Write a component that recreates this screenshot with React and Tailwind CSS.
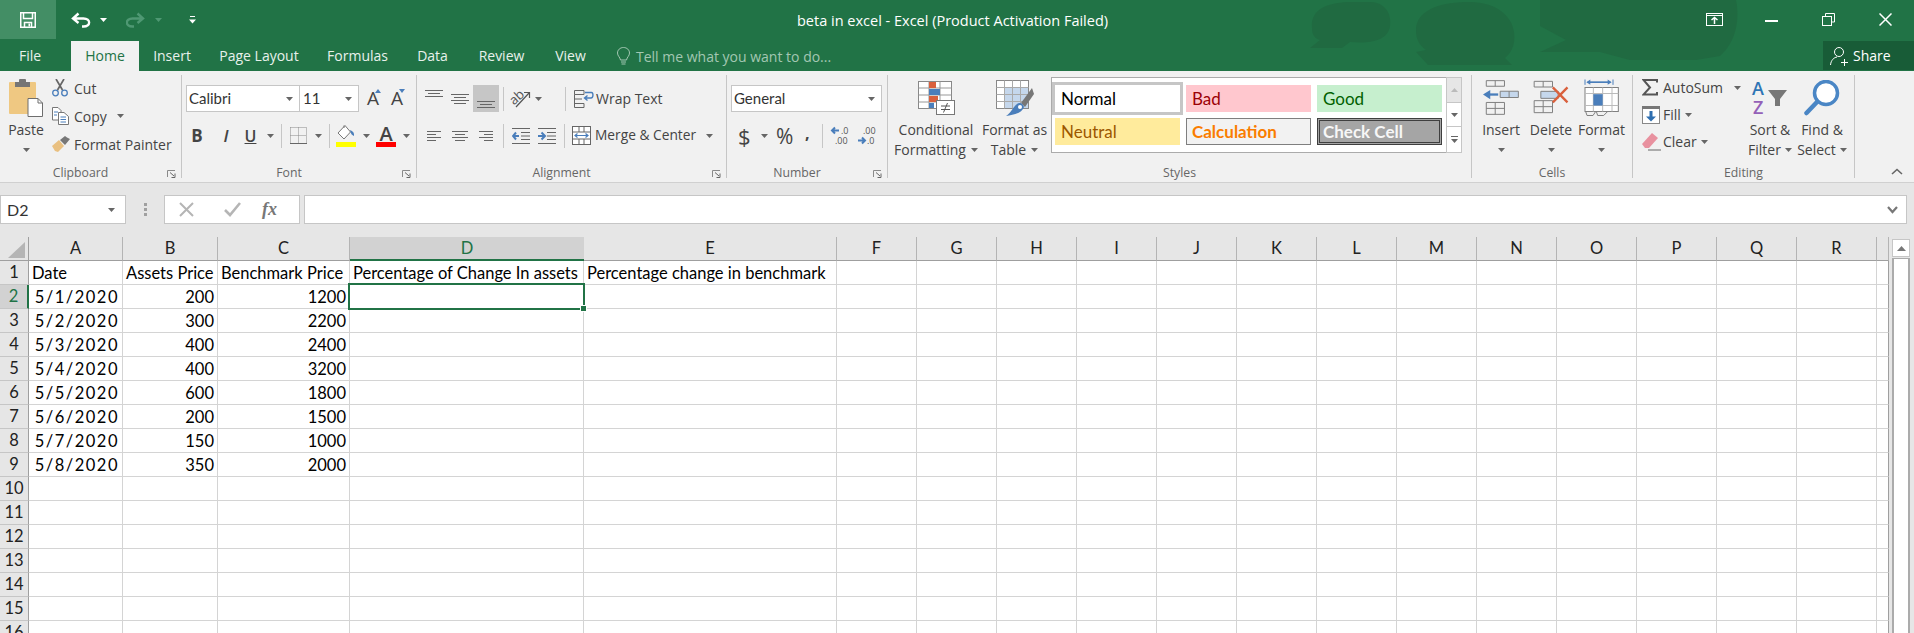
import React from 'react';

const Caret = ({ color = '#666', className = '' }) => (
  <svg width="7" height="4" viewBox="0 0 7 4" className={`shrink-0 ${className}`}>
    <path d="M0 0H7L3.5 4Z" fill={color} />
  </svg>
);

const Launcher = () => (
  <svg width="9" height="8" viewBox="0 0 9 8" className="shrink-0">
    <path d="M.5 7V.5H8" fill="none" stroke="#8a8a8a" />
    <path d="M3 2.5L7 6M8 3.5V7.5H4.5" fill="none" stroke="#666" />
  </svg>
);

const Sep = ({ className = '' }) => <div className={`w-px h-[24px] bg-[#c6c6c6] shrink-0 ${className}`} />;

const Lines = ({ rows, width = 18, height = 12 }) => (
  <svg width={width} height={height} viewBox={`0 0 ${width} ${height}`}>
    {rows.map(([a, b, y], i) => (
      <path key={i} d={`M${a} ${y + 0.5}H${b}`} stroke="#666" />
    ))}
  </svg>
);

// each ribbon group: content on top, name + launcher below
const Group = ({ name, launcher, className, children }) => (
  <div className={`shrink-0 h-[103px] border-r border-[#c6c6c6] flex flex-col ${className}`}>
    <div className="h-[90px] shrink-0 flex">{children}</div>
    <div className="h-[13px] shrink-0 mt-[2px] flex items-center text-[12.25px] text-[#666]">
      <span className="flex-1 text-center">{name}</span>
      {launcher && <div className="w-[20px] flex justify-end pr-[5px] pt-[1px]"><Launcher /></div>}
    </div>
  </div>
);

const BigBtn = ({ icon, lines, caretBelow, className = '' }) => (
  <div className={`flex flex-col items-center shrink-0 ${className}`}>
    <div className="h-[45px] flex items-center justify-center">{icon}</div>
    {lines.map((l, i) => (
      <div key={i} className="h-[20px] leading-[20px] flex items-center whitespace-nowrap">{l}</div>
    ))}
    {caretBelow && <div className="h-[20px] flex items-center"><Caret /></div>}
  </div>
);

const PasteIcon = () => (
  <svg width="34" height="38" viewBox="0 0 34 38">
    <rect x="0" y="3" width="27" height="32" rx="1" fill="#efc882" />
    <rect x="6" y="3" width="15" height="5" fill="#757575" />
    <rect x="10" y="0" width="7" height="4" rx="1" fill="#757575" />
    <path d="M19 19.5H29L33.5 24V37.5H19Z" fill="#fff" stroke="#6e6e6e" />
    <path d="M29 19.5V24H33.5" fill="none" stroke="#6e6e6e" />
  </svg>
);

const CutIcon = () => (
  <svg width="16" height="18" viewBox="0 0 16 18">
    <path d="M4 0L10.5 11M12 0L5.5 11" stroke="#666" strokeWidth="1.7" />
    <circle cx="3.5" cy="14" r="2.8" fill="none" stroke="#4a7ebb" strokeWidth="1.3" />
    <circle cx="12.5" cy="14" r="2.8" fill="none" stroke="#4a7ebb" strokeWidth="1.3" />
  </svg>
);

const CopyIcon = () => (
  <svg width="17" height="18" viewBox="0 0 17 18">
    <path d="M.5.5H6L9 3.5V13H.5Z" fill="#fff" stroke="#777" />
    <path d="M6.5 5.5H12L16.5 9.5V17.5H6.5Z" fill="#fff" stroke="#777" />
    <path d="M2 5H6M2 8H5M8.5 10H14M8.5 12.5H14M8.5 15H14" stroke="#4a7ebb" />
  </svg>
);

const PainterIcon = () => (
  <svg width="18" height="16" viewBox="0 0 18 16">
    <path d="M0 10L7 4L12 10L6 16L3 15Z" fill="#e9c080" />
    <path d="M8 4L13 0L15 1.5L18 3L13 9Z" fill="#777" />
  </svg>
);

const BordersIcon = () => (
  <svg width="17" height="17" viewBox="0 0 17 17">
    <path d="M.5.5H16.5V16.5M.5.5V16.5M8.5.5V16.5M.5 8.5H16.5" fill="none" stroke="#888" strokeDasharray="1 1" />
    <path d="M0 16.5H17" stroke="#666" />
  </svg>
);

const FillIcon = () => (
  <div className="flex flex-col items-center w-[20px]">
    <svg width="18" height="17" viewBox="0 0 18 17">
      <path d="M8 .5L13.5 7L7 14L1 8Z" fill="#fff" stroke="#777" />
      <path d="M7 .5V3" stroke="#777" />
      <path d="M13 5C16 6 17.5 8 17 11C15 10 14 9 13.5 7Z" fill="#4a7ebb" />
    </svg>
    <div className="w-[20px] h-[5px] bg-[#ffff00]" />
  </div>
);

const OrientIcon = () => (
  <svg width="20" height="20" viewBox="0 0 20 20" className="overflow-visible">
    <text x="0" y="13" fontSize="13" fill="#555" transform="rotate(-42 6 11)" fontFamily="Open Sans, sans-serif">ab</text>
    <path d="M5 18L18 4M13 3.5H18.5V9" fill="none" stroke="#555" strokeWidth="1.2" />
  </svg>
);

const WrapIcon = () => (
  <svg width="20" height="18" viewBox="0 0 20 18">
    <path d="M.5.5H10V4.5H.5ZM.5 4.5V17.5H10V13.5H.5M.5 9H8" fill="none" stroke="#666" />
    <path d="M11 2.5H17.5C19.5 2.5 19.5 8 17 8H11M13.5 5.5L10.5 8L13.5 10.5" fill="none" stroke="#4a7ebb" strokeWidth="1.4" />
  </svg>
);

const MergeIcon = () => (
  <svg width="20" height="19" viewBox="0 0 20 19">
    <rect x=".5" y=".5" width="18" height="18" fill="#fff" stroke="#666" />
    <path d="M.5 6H18.5M.5 13H18.5M7 .5V6M12 .5V6M7 13V18.5M12 13V18.5" stroke="#666" />
    <path d="M3 9.5H16M5.5 7.5L3 9.5L5.5 11.5M13.5 7.5L16 9.5L13.5 11.5" fill="none" stroke="#4a7ebb" strokeWidth="1.2" />
  </svg>
);

const IndentIcon = ({ flip }) => (
  <svg width="18" height="16" viewBox="0 0 18 16">
    <path d="M0 .5H18M0 15.5H18M9 4.5H18M9 8H18M9 11.5H18" stroke="#666" />
    {flip ? (
      <path d="M7 8H1M4 4.5L1 8L4 11.5" fill="none" stroke="#4a7ebb" strokeWidth="2" />
    ) : (
      <path d="M0 8H6.5M3.5 4.5L7 8L3.5 11.5" fill="none" stroke="#4a7ebb" strokeWidth="2" />
    )}
  </svg>
);

const DecimalIcon = ({ more }) => (
  <svg width="20" height="18" viewBox="0 0 20 18" className="overflow-visible" fontFamily="Open Sans, sans-serif" fontSize="9" fill="#555">
    {more ? (
      <>
        <path d="M0 3.5H7M3 .5L0 3.5L3 6.5" fill="none" stroke="#4a7ebb" strokeWidth="2" />
        <text x="9" y="7">.0</text>
        <text x="3" y="17">.00</text>
      </>
    ) : (
      <>
        <text x="5" y="7">.00</text>
        <path d="M0 13.5H7M4 10.5L7 13.5L4 16.5" fill="none" stroke="#4a7ebb" strokeWidth="2" />
        <text x="9" y="17">.0</text>
      </>
    )}
  </svg>
);

const CondIcon = () => (
  <svg width="37" height="34" viewBox="0 0 37 34">
    <rect x=".5" y=".5" width="33" height="27" fill="#fff" stroke="#888" />
    <path d="M11 .5V27.5M22 .5V27.5M.5 7H33.5M.5 14H33.5M.5 21H33.5" stroke="#999" />
    <rect x="11" y="1" width="7" height="6" fill="#d9603d" />
    <rect x="11" y="8" width="11" height="6" fill="#4a7ebb" />
    <rect x="11" y="15" width="9" height="6" fill="#d9603d" />
    <rect x="11" y="22" width="5" height="5" fill="#4a7ebb" />
    <rect x="18.5" y="19.5" width="18" height="14" fill="#fff" stroke="#777" />
    <path d="M23 25H32M23 28.5H32M29.5 22L25.5 31.5" stroke="#555" />
  </svg>
);

const TableIcon = () => (
  <svg width="38" height="36" viewBox="0 0 38 36">
    <rect x=".5" y=".5" width="32" height="28" fill="#fff" stroke="#888" />
    <rect x="9" y="8" width="23" height="20" fill="#c5d7ec" />
    <path d="M8.5 .5V28.5M16.5 .5V28.5M24.5 .5V28.5M.5 7.5H32.5M.5 14.5H32.5M.5 21.5H32.5" stroke="#aaa" />
    <path d="M36 8L38 14L29 27L25 23Z" fill="#777" />
    <path d="M28 27C26 33 18 35 10 36C15 33 17 27 21 24C23 22 27 23 28 27Z" fill="#4a7ebb" />
    <circle cx="24" cy="27" r="2" fill="#fff" />
  </svg>
);

const InsertIcon = () => (
  <svg width="38" height="37" viewBox="15 10 115 110" fill="none" stroke="#808080" strokeWidth="3">
    <path d="M28 14H83V31H28ZM55 14V31" />
    <path d="M70 46H125V65H70ZM97 46V65" fill="#c5d7ec" />
    <path d="M28 80H83V116H28ZM55 80V116M28 98H83" />
    <path d="M64 56H26" stroke="#4a7ebb" strokeWidth="7" />
    <path d="M18 56L40 42V70Z" fill="#4a7ebb" stroke="none" />
  </svg>
);

const DeleteIcon = () => (
  <svg width="37" height="35" viewBox="175 10 110 105" fill="none" stroke="#808080" strokeWidth="3">
    <path d="M178 14H233V31H178ZM205 14V31" />
    <path d="M198 44H250V65H198Z" fill="#c5d7ec" />
    <path d="M178 72H233V108H178ZM205 72V108M178 90H233" />
    <path d="M234 32L278 77M278 32L234 77" stroke="#d9603d" strokeWidth="7" />
  </svg>
);

const FormatIcon = () => (
  <svg width="35" height="39" viewBox="325 6 105 116" fill="none" stroke="#808080" strokeWidth="3">
    <path d="M328 10V26M412 10V26" stroke="#4a7ebb" />
    <path d="M336 18H404" stroke="#4a7ebb" strokeWidth="5" />
    <path d="M332 18L344 10V26ZM408 18L396 10V26Z" fill="#4a7ebb" stroke="none" />
    <rect x="328" y="34" width="100" height="72" fill="#fff" />
    <path d="M353 34V106M381 34V106M409 34V106M328 52H428M328 88H428" stroke="#bbb" />
    <rect x="353" y="54" width="28" height="34" fill="#4a7ebb" stroke="none" />
    <path d="M330 106L334 118H352L360 106M362 106L366 118H384L396 106" />
  </svg>
);

const SigmaIcon = () => (
  <svg width="16" height="17" viewBox="0 0 16 17">
    <path d="M15 3.5V1H1.5L8 8.5L1.5 15.5H15V13" fill="none" stroke="#555" strokeWidth="2" />
  </svg>
);

const FillDownIcon = () => (
  <svg width="18" height="18" viewBox="0 0 18 18">
    <rect x=".5" y=".5" width="17" height="17" fill="#fff" stroke="#888" />
    <rect x="0" y="0" width="18" height="3" fill="#777" />
    <path d="M9 5V12" stroke="#2f6fb0" strokeWidth="3" />
    <path d="M4 10.5H14L9 15.5Z" fill="#2f6fb0" />
  </svg>
);

const ClearIcon = () => (
  <svg width="19" height="18" viewBox="0 0 19 18">
    <path d="M0 11L10 0L16 5L7 15H3Z" fill="#e8919f" />
    <path d="M6 17H19" stroke="#666" />
  </svg>
);

const SortIcon = () => (
  <svg width="37" height="34" viewBox="0 0 37 34" className="overflow-visible" fontFamily="Open Sans, sans-serif" fontWeight="600">
    <text x="0" y="14" fontSize="18" fill="#2f75b5">A</text>
    <text x="1" y="33" fontSize="18" fill="#9460b8">Z</text>
    <path d="M16 9H35L28 18V25H23V18Z" fill="#777" />
  </svg>
);

const FindIcon = () => (
  <svg width="36" height="36" viewBox="0 0 36 36">
    <circle cx="22" cy="13" r="11.5" fill="#fff" stroke="#4a86c5" strokeWidth="3.5" />
    <path d="M13 22L2.5 33" stroke="#4a86c5" strokeWidth="4.5" strokeLinecap="round" />
  </svg>
);

const Sheet = () => {
  const columns = ['A', 'B', 'C', 'D', 'E', 'F', 'G', 'H', 'I', 'J', 'K', 'L', 'M', 'N', 'O', 'P', 'Q', 'R', ''];
  const data = [
    ['Date', 'Assets Price', 'Benchmark Price', 'Percentage of Change In assets', 'Percentage change in benchmark'],
    ['5/1/2020', '200', '1200'],
    ['5/2/2020', '300', '2200'],
    ['5/3/2020', '400', '2400'],
    ['5/4/2020', '400', '3200'],
    ['5/5/2020', '600', '1800'],
    ['5/6/2020', '200', '1500'],
    ['5/7/2020', '150', '1000'],
    ['5/8/2020', '350', '2000'],
  ];
  const rows = Array.from({ length: 16 }, (_, i) => i + 1);

  return (
    <div className="grid grid-cols-[29px_94px_95px_132px_234px_253px_repeat(13,80px)_12px] auto-rows-[24px] w-[1889px] font-['Lato',sans-serif] text-[16.5px] text-black">
      <div className="bg-[#e6e6e6] border-r border-b border-[#9f9f9f] flex items-end justify-end pr-[3px] pb-[2px]">
        <svg width="17" height="16" viewBox="0 0 17 16"><path d="M17 0V16H0Z" fill="#b5b5b5" /></svg>
      </div>
      {columns.map((c, i) => (
        <div
          key={i}
          className={
            c === 'D'
              ? 'bg-[#d2d2d2] border-b-2 border-[#217346] text-[#217346] flex items-center justify-center'
              : 'bg-[#e6e6e6] border-r border-b border-r-[#b4b4b4] border-b-[#9f9f9f] flex items-center justify-center text-[#222]'
          }
        >
          {c}
        </div>
      ))}
      {rows.map((r) => {
        const cells = data[r - 1] || [];
        return (
          <React.Fragment key={r}>
            <div
              className={
                r === 2
                  ? 'bg-[#d2d2d2] border-r-2 border-r-[#217346] border-b border-b-[#c6c6c6] flex items-center justify-center text-[#217346]'
                  : 'bg-[#e6e6e6] border-r border-b border-r-[#9f9f9f] border-b-[#c6c6c6] flex items-center justify-center text-[#222]'
              }
            >
              {r}
            </div>
            {columns.map((c, i) => (
              <div
                key={c + i}
                className={`relative bg-white border-r border-b border-[#d4d4d4] pt-[2px] flex items-center whitespace-nowrap ${
                  r > 1 && i === 0 ? 'justify-end pr-[3px] tracking-[1.5px]' : r > 1 && i < 3 ? 'justify-end pr-[3px]' : 'pl-[3px]'
                } ${i === 18 ? 'border-r-[#9f9f9f]' : ''}`}
              >
                {cells[i]}
                {r === 2 && c === 'D' && (
                  <div className="absolute z-10 -top-[2px] -left-[2px] -right-[2px] -bottom-[2px] border-2 border-[#217346]">
                    <div className="absolute -right-[4px] -bottom-[4px] w-[7px] h-[7px] bg-[#217346] border border-white" />
                  </div>
                )}
              </div>
            ))}
          </React.Fragment>
        );
      })}
    </div>
  );
};

const App = () => {
  return (
    <div className="w-[1914px] h-[633px] overflow-hidden bg-[#e6e6e6] font-['Open_Sans',sans-serif] text-[14px] text-[#444]">
      {/* title bar and tabs */}
      <div className="relative h-[71px] bg-[#217346] text-white">
        <svg className="absolute left-[1300px] top-0" width="560" height="65" viewBox="0 0 560 65">
          <g fill="#206a41">
            <path d="M12 28C10 8 30 2 52 2H70C85 2 92 14 90 26C88 40 72 44 50 42L42 48L10 48L20 40C14 38 12 34 12 28Z" />
            <path d="M116 30C116 12 136 2 170 2C196 2 212 16 214 32C216 46 210 54 205 58L212 65H128L116 52L126 50C118 44 116 38 116 30Z" />
            <path d="M240 0H436C440 20 436 42 420 56L396 60H330L300 52H240L266 40L240 26Z" />
          </g>
        </svg>

        <div className="relative h-[41px] flex">
          <div className="w-[56px] h-[39px] bg-[#438e65] flex items-center justify-center">
            <svg width="16" height="16" viewBox="0 0 16 16" fill="none" stroke="#fff">
              <path d="M.75.75H15.25V15.25H.75Z" strokeWidth="1.5" />
              <path d="M3.5 1V6.5H12.5V1M4.5 15V10.5H11.5V15" strokeWidth="1.5" />
              <rect x="8.5" y="11.5" width="1.5" height="3" fill="#fff" stroke="none" />
            </svg>
          </div>
          <div className="w-[741px] h-[39px] flex items-center">
            <svg className="ml-[15px]" width="20" height="16" viewBox="0 0 20 16" fill="none" stroke="#fff" strokeWidth="2.4">
              <path d="M7.5 1.5L2 6.5L7.5 11M2 6.5H12.5C20 6.5 20 14.5 12.5 14.5H11" />
            </svg>
            <Caret color="#fff" className="ml-[9px]" />
            <svg className="ml-[19px]" width="19" height="16" viewBox="0 0 19 16" fill="none" stroke="#4f9873" strokeWidth="2.4">
              <path d="M11.5 1.5L17 6.5L11.5 11M17 6.5H6.5C-1 6.5 -1 14.5 6.5 14.5H8" />
            </svg>
            <Caret color="#4f9873" className="ml-[10px]" />
            <svg className="ml-[27px]" width="7" height="8" viewBox="0 0 7 8">
              <path d="M1 .5H6" stroke="#fff" />
              <path d="M0 3.5H7L3.5 7.5Z" fill="#fff" />
            </svg>
          </div>
          <div className="h-[41px] flex items-center text-[14.5px] text-white">beta in excel - Excel (Product Activation Failed)</div>
          <div className="ml-auto flex items-center h-[39px]">
            <svg width="17" height="13" viewBox="0 0 17 13" fill="none" stroke="#fff" className="mr-[42px]">
              <rect x=".5" y=".5" width="16" height="12" />
              <path d="M.5 2.5H16.5" />
              <path d="M8.5 11V4.5M5.5 7L8.5 4.5L11.5 7" strokeWidth="1.5" />
            </svg>
            <div className="w-[13px] h-[2px] bg-white mr-[44px] mt-[3px]" />
            <svg width="13" height="13" viewBox="0 0 13 13" fill="none" stroke="#fff" className="mr-[44px]">
              <path d="M3.5 3V.5H12.5V9H9.5" />
              <rect x=".5" y="3.5" width="9" height="9" />
            </svg>
            <svg width="13" height="13" viewBox="0 0 13 13" fill="none" stroke="#fff" strokeWidth="1.5" className="mr-[22px]">
              <path d="M.5.5L12.5 12.5M12.5.5L.5 12.5" />
            </svg>
          </div>
        </div>

        <div className="relative h-[30px] flex text-[#e8f1ec]">
          <div className="w-[71px] pl-[19px] leading-[29px]">File</div>
          <div className="w-[68px] h-[30px] bg-[#f1f1f1] text-[#217346] text-center leading-[29px]">Home</div>
          <div className="w-[66px] text-center leading-[29px]">Insert</div>
          <div className="w-[108px] text-center leading-[29px]">Page Layout</div>
          <div className="w-[89px] text-center leading-[29px]">Formulas</div>
          <div className="w-[61px] text-center leading-[29px]">Data</div>
          <div className="w-[77px] text-center leading-[29px]">Review</div>
          <div className="w-[61px] text-center leading-[29px]">View</div>
          <div className="ml-[16px] flex items-center text-[#a3c7b2] leading-[29px]">
            <svg width="13" height="19" viewBox="0 0 13 19" fill="none" stroke="#a3c7b2">
              <path d="M3.5 13C3 10 .5 9 .5 6C.5 3 3 .5 6.5 .5S12.5 3 12.5 6C12.5 9 10 10 9.5 13ZM4 15H9M4.5 17H8.5" />
            </svg>
            <span className="ml-[6px]">Tell me what you want to do...</span>
          </div>
          <div className="ml-auto w-[91px] h-[29px] bg-[#185c37] flex items-center pl-[7px] text-white">
            <svg width="20" height="20" viewBox="0 0 20 20" fill="none" stroke="#fff">
              <circle cx="9" cy="6" r="4.5" />
              <path d="M.5 19C1 14 4 11.5 7 11M14.5 13V20M11 16.5H18" />
            </svg>
            <span className="ml-[3px]">Share</span>
          </div>
        </div>
      </div>

      {/* ribbon */}
      <div className="h-[112px] bg-[#f1f1f1] border-b border-[#d0d0d0] pt-[4px] flex">
        <Group name="Clipboard" launcher className="w-[182px]">
          <BigBtn className="w-[50px] ml-[1px]" icon={<PasteIcon />} lines={['Paste']} caretBelow />
          <div className="ml-[1px] -mt-[1px] flex flex-col">
            <div className="h-[28px] flex items-center"><span className="w-[22px]"><CutIcon /></span>Cut</div>
            <div className="h-[28px] flex items-center"><span className="w-[22px]"><CopyIcon /></span>Copy<Caret className="ml-[10px]" /></div>
            <div className="h-[28px] flex items-center whitespace-nowrap"><span className="w-[22px]"><PainterIcon /></span>Format Painter</div>
          </div>
        </Group>

        <Group name="Font" launcher className="w-[235px]">
          <div className="flex flex-col pl-[4px] pt-[10px]">
            <div className="h-[27px] flex">
              <div className="w-[114px] bg-white border border-[#c6c6c6] flex items-center justify-between pl-[2px] pr-[6px] font-['Lato',sans-serif] text-[15px] text-[#333]">Calibri<Caret /></div>
              <div className="w-[60px] -ml-px bg-white border border-[#c6c6c6] flex items-center justify-between pl-[3px] pr-[6px] font-['Lato',sans-serif] text-[15px] text-[#333]">11<Caret /></div>
              <div className="ml-[8px] w-[24px] flex items-start pt-[3px] text-[19px] leading-[20px]">A<svg width="6" height="4" viewBox="0 0 6 4" className="mt-[1px] -ml-[4px]"><path d="M3 0L6 4H0Z" fill="#4a7ebb" /></svg></div>
              <div className="w-[24px] flex items-start pt-[3px] text-[19px] leading-[20px]">A<svg width="6" height="4" viewBox="0 0 6 4" className="mt-[1px] -ml-[4px]"><path d="M0 0H6L3 4Z" fill="#4a7ebb" /></svg></div>
            </div>
            <div className="h-[27px] mt-[10px] -ml-[4px] flex items-center">
              <div className="w-[30px] text-center font-bold text-[17px]">B</div>
              <div className="w-[28px] text-center italic font-semibold text-[17px]">I</div>
              <div className="w-[21px] text-center underline font-semibold text-[16px]">U</div>
              <div className="w-[19px] flex justify-center"><Caret /></div>
              <Sep className="ml-[1px]" />
              <div className="w-[32px] flex justify-center"><BordersIcon /></div>
              <div className="w-[8px] flex justify-center"><Caret /></div>
              <Sep className="ml-[7px]" />
              <div className="w-[32px] flex justify-center"><FillIcon /></div>
              <div className="w-[8px] flex justify-center"><Caret /></div>
              <div className="w-[32px] flex flex-col items-center">
                <span className="font-semibold text-[20px] leading-[17px]">A</span>
                <div className="w-[20px] h-[5px] bg-[#ff0000]" />
              </div>
              <div className="w-[8px] flex justify-center"><Caret /></div>
            </div>
          </div>
        </Group>

        <Group name="Alignment" launcher className="w-[310px]">
          <div className="flex flex-col pl-[4px] pt-[10px]">
            <div className="h-[27px] flex items-center">
              <div className="w-[26px] flex justify-center -mt-[6px]"><Lines rows={[[0, 18, 0], [3, 15, 3], [0, 18, 6]]} /></div>
              <div className="w-[26px] flex justify-center"><Lines rows={[[0, 18, 1], [3, 15, 4], [0, 18, 7], [3, 15, 10]]} /></div>
              <div className="w-[26px] h-[27px] bg-[#c6c6c6] flex justify-center items-end pb-[3px]"><Lines rows={[[0, 18, 2], [3, 15, 5], [0, 18, 8]]} height={10} /></div>
              <Sep className="ml-[4px]" />
              <div className="ml-[7px] flex items-center"><OrientIcon /><Caret className="ml-[4px]" /></div>
              <Sep className="ml-[23px]" />
              <div className="ml-[8px] flex items-center"><WrapIcon /><span className="ml-[2px]">Wrap Text</span></div>
            </div>
            <div className="h-[27px] mt-[10px] flex items-center">
              <div className="w-[26px] flex justify-center"><Lines rows={[[2, 16, 1], [2, 11, 4], [2, 16, 7], [2, 11, 10]]} /></div>
              <div className="w-[26px] flex justify-center"><Lines rows={[[1, 17, 1], [4, 14, 4], [1, 17, 7], [4, 14, 10]]} /></div>
              <div className="w-[26px] flex justify-center"><Lines rows={[[2, 16, 1], [7, 16, 4], [2, 16, 7], [7, 16, 10]]} /></div>
              <Sep className="ml-[4px]" />
              <div className="ml-[8px]"><IndentIcon flip /></div>
              <div className="ml-[8px]"><IndentIcon /></div>
              <Sep className="ml-[8px]" />
              <div className="ml-[7px] flex items-center whitespace-nowrap"><MergeIcon /><span className="ml-[3px] text-[13.75px]">Merge &amp; Center</span><Caret className="ml-[10px]" /></div>
            </div>
          </div>
        </Group>

        <Group name="Number" launcher className="w-[161px]">
          <div className="flex flex-col pl-[4px] pt-[10px]">
            <div className="w-[151px] h-[27px] bg-white border border-[#c6c6c6] flex items-center justify-between pl-[2px] pr-[6px] font-['Lato',sans-serif] text-[15px] text-[#333]">General<Caret /></div>
            <div className="h-[27px] mt-[10px] flex items-center">
              <span className="ml-[7px] w-[13px] text-[22px] leading-[24px]">$</span>
              <Caret className="ml-[10px]" />
              <span className="ml-[8px] w-[18px] text-[21px] leading-[24px]">%</span>
              <span className="ml-[11px] font-bold text-[16px] -mt-[6px]">,</span>
              <Sep className="ml-[12px]" />
              <div className="ml-[9px]"><DecimalIcon more /></div>
              <div className="ml-[6px]"><DecimalIcon /></div>
            </div>
          </div>
        </Group>

        <Group name="Styles" className="w-[584px]">
          <BigBtn className="w-[92px] ml-[2px]" icon={<CondIcon />} lines={['Conditional', <>Formatting<Caret className="ml-[5px]" /></>]} />
          <BigBtn className="w-[65px]" icon={<TableIcon />} lines={['Format as', <>Table<Caret className="ml-[5px]" /></>]} />
          <div className="ml-[4px] mt-[2px] h-[76px] flex">
            <div className="w-[396px] h-[76px] bg-white border border-[#ababab] pl-[3px] pt-[7px] grid grid-cols-[125px_125px_125px] auto-rows-[27px] gap-[6px] font-['Lato',sans-serif] text-[17px] leading-[25px]">
              <div className="bg-white outline-[3px] outline-[#c6c6c6] flex items-center pl-[6px] pb-[1px] text-black">Normal</div>
              <div className="bg-[#ffc7ce] flex items-center pl-[6px] pb-[1px] text-[#9c0006]">Bad</div>
              <div className="bg-[#c6efce] flex items-center pl-[6px] pb-[1px] text-[#006100]">Good</div>
              <div className="bg-[#ffeb9c] flex items-center pl-[6px] pb-[1px] text-[#9c5700]">Neutral</div>
              <div className="bg-[#f2f2f2] border border-[#7f7f7f] flex items-center pl-[5px] pb-[1px] text-[#fa7d00] font-bold">Calculation</div>
              <div className="bg-[#a5a5a5] border-[3px] border-double border-[#3f3f3f] flex items-center pl-[3px] text-[#f7f7f7] font-bold">Check Cell</div>
            </div>
            <div className="w-[16px] -ml-px flex flex-col">
              <div className="h-[26px] bg-[#e6e6e6] border border-[#c6c6c6] flex items-center justify-center">
                <svg width="7" height="4" viewBox="0 0 7 4"><path d="M0 4H7L3.5 0Z" fill="#bbb" /></svg>
              </div>
              <div className="h-[23px] bg-white border-x border-[#c6c6c6] flex items-center justify-center"><Caret /></div>
              <div className="h-[27px] bg-white border border-[#c6c6c6] flex flex-col items-center justify-center">
                <div className="w-[7px] h-px bg-[#666] mb-[2px]" />
                <Caret />
              </div>
            </div>
          </div>
        </Group>

        <Group name="Cells" className="w-[161px]">
          <BigBtn className="w-[50px] ml-[4px]" icon={<InsertIcon />} lines={['Insert']} caretBelow />
          <BigBtn className="w-[50px]" icon={<DeleteIcon />} lines={['Delete']} caretBelow />
          <BigBtn className="w-[51px]" icon={<FormatIcon />} lines={['Format']} caretBelow />
        </Group>

        <Group name="Editing" className="w-[222px]">
          <div className="w-[111px] pl-[9px] -mt-[1px] flex flex-col">
            <div className="h-[27px] flex items-center"><span className="w-[21px]"><SigmaIcon /></span>AutoSum<Caret className="ml-[11px]" /></div>
            <div className="h-[27px] flex items-center"><span className="w-[21px]"><FillDownIcon /></span>Fill<Caret className="ml-[4px]" /></div>
            <div className="h-[27px] flex items-center"><span className="w-[21px]"><ClearIcon /></span>Clear<Caret className="ml-[4px]" /></div>
          </div>
          <BigBtn className="w-[52px]" icon={<SortIcon />} lines={['Sort &', <>Filter<Caret className="ml-[4px]" /></>]} />
          <BigBtn className="w-[52px]" icon={<FindIcon />} lines={['Find &', <>Select<Caret className="ml-[4px]" /></>]} />
        </Group>

        <div className="flex-1 h-[103px] flex items-end justify-end pr-[11px] pb-[3px]">
          <svg width="12" height="7" viewBox="0 0 12 7" fill="none" stroke="#666" strokeWidth="1.6"><path d="M1 6L6 1.5L11 6" /></svg>
        </div>
      </div>

      {/* formula bar */}
      <div className="h-[54px] pt-[12px] flex items-start">
        <div className="w-[126px] h-[29px] bg-white border border-[#c6c6c6] flex items-center justify-between pl-[6px] pr-[10px] font-['Lato',sans-serif] text-[16px] text-[#333]">D2<Caret /></div>
        <div className="w-[38px] h-[29px] flex flex-col items-center justify-center gap-[2px]">
          <div className="w-[3px] h-[3px] bg-[#a0a0a0]" />
          <div className="w-[3px] h-[3px] bg-[#a0a0a0]" />
          <div className="w-[3px] h-[3px] bg-[#a0a0a0]" />
        </div>
        <div className="w-[136px] h-[29px] bg-white border border-[#c6c6c6] flex items-center">
          <svg className="ml-[14px]" width="15" height="15" viewBox="0 0 15 15" fill="none" stroke="#b5b5b5" strokeWidth="2"><path d="M1 1L14 14M14 1L1 14" /></svg>
          <svg className="ml-[30px]" width="17" height="15" viewBox="0 0 17 15" fill="none" stroke="#b5b5b5" strokeWidth="2.6"><path d="M1 8L6 13L16 1" /></svg>
          <span className="ml-[21px] font-['Liberation_Serif',serif] italic font-bold text-[18px] text-[#777]">fx</span>
        </div>
        <div className="ml-[4px] w-[1603px] h-[29px] bg-white border border-[#c6c6c6] flex items-center justify-end pr-[8px]">
          <svg width="11" height="8" viewBox="0 0 11 8" fill="none" stroke="#777" strokeWidth="2.2"><path d="M1 1L5.5 6L10 1" /></svg>
        </div>
      </div>

      {/* worksheet */}
      <div className="flex">
        <Sheet />
        <div className="w-[25px] pl-[3px] pt-[2px] flex flex-col">
          <div className="w-[18px] h-[18px] bg-white border border-[#c6c6c6] flex items-center justify-center">
            <svg width="9" height="5" viewBox="0 0 9 5"><path d="M0 5H9L4.5 0Z" fill="#777" /></svg>
          </div>
          <div className="w-[18px] h-[400px] mt-px bg-white border-x-2 border-t border-[#ababab]" />
        </div>
      </div>
    </div>
  );
};

export default App;
